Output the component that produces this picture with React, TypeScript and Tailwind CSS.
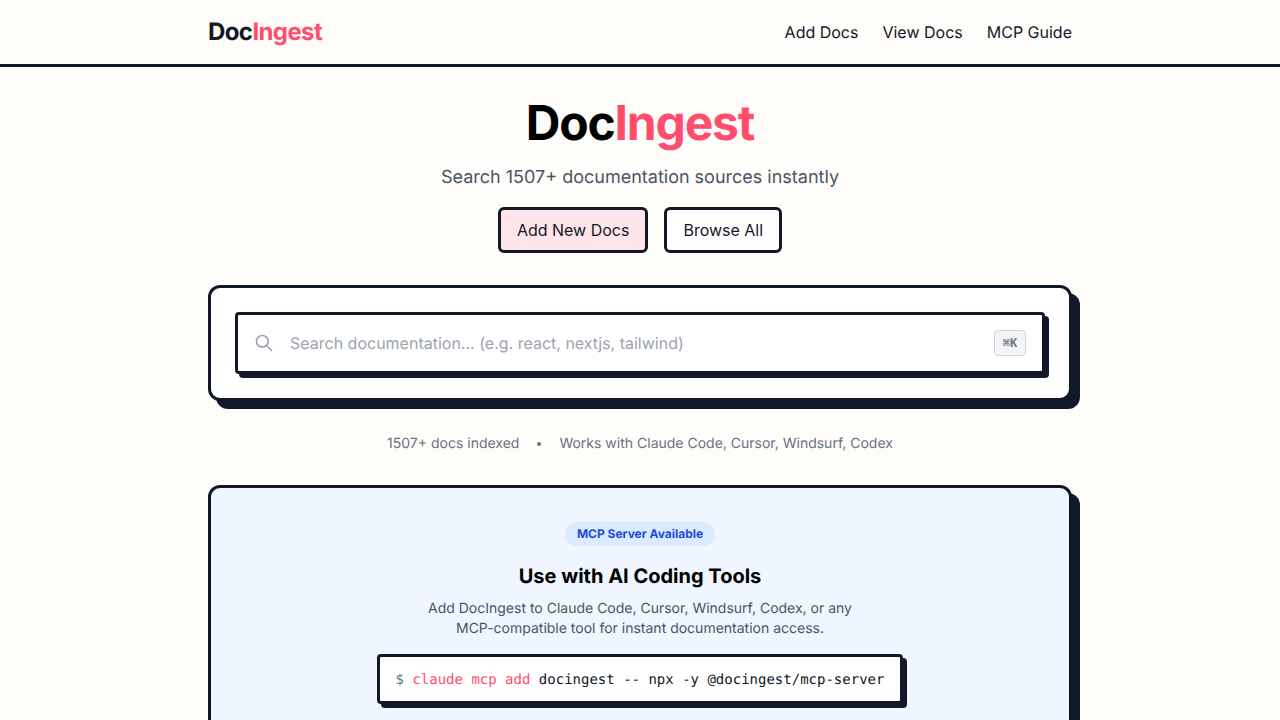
const navLinks = ['Add Docs', 'View Docs', 'MCP Guide'];

function Logo() {
  return (
    <a className="text-2xl font-bold tracking-tight text-[#111827]">
      Doc<span className="text-[#ff4d6d]">Ingest</span>
    </a>
  );
}

function SearchIcon() {
  return (
    <svg className="h-5 w-5 text-[#9ca3af]" fill="none" viewBox="0 0 24 24" stroke="currentColor" strokeWidth={2}>
      <path strokeLinecap="round" strokeLinejoin="round" d="M21 21l-6-6m2-5a7 7 0 11-14 0 7 7 0 0114 0z" />
    </svg>
  );
}

export default function App() {
  return (
    <div className="min-h-screen bg-[#fffdf9] font-['Inter',sans-serif] text-[#111827] [text-rendering:geometricPrecision]">
      <header className="border-b-[3px] border-[#111827]">
        <div className="mx-auto flex h-16 max-w-4xl items-center justify-between px-4">
          <Logo />
          <nav className="flex items-center gap-6">
            {navLinks.map((link) => (
              <a key={link} className="text-base text-[#111827]">
                {link}
              </a>
            ))}
          </nav>
        </div>
      </header>

      <main className="mx-auto max-w-4xl px-4 pt-8">
        <section className="flex flex-col items-center">
          <h1 className="text-5xl font-bold tracking-tight text-black">
            Doc<span className="text-[#ff4d6d]">Ingest</span>
          </h1>
          <p className="mt-4 text-lg leading-[30px] text-[#4b5563]">Search 1507+ documentation sources instantly</p>
          <div className="mt-[14px] flex items-center gap-4">
            <button className="rounded-md border-[3px] border-[#111827] bg-[#ffe5ea] px-4 py-2 text-base">
              Add New Docs
            </button>
            <button className="rounded-md border-[3px] border-[#111827] bg-white px-4 py-2 text-base">
              Browse All
            </button>
          </div>
        </section>

        <section className="mt-8 rounded-xl border-[3px] border-[#111827] bg-white p-6 shadow-[8px_8px_0_#111827]">
          <div className="flex h-[62px] items-center rounded-sm border-[3px] border-[#111827] bg-white pr-4 pl-4 shadow-[4px_4px_0_#111827]">
            <SearchIcon />
            <span className="ml-4 flex-1 text-base text-[#9ca3af]">
              Search documentation... (e.g. react, nextjs, tailwind)
            </span>
            <kbd className="flex h-[26px] w-8 items-center justify-center rounded border border-[#d1d5db] bg-[#f3f4f6] font-['DejaVu_Sans_Mono',monospace] text-xs font-semibold text-[#6b7280]">
              ⌘K
            </kbd>
          </div>
        </section>

        <div className="mt-8 flex items-center justify-center gap-[18px] text-sm leading-[22px] text-[#6b7280]">
          <span>1507+ docs indexed</span>
          <span className="h-1 w-1 rounded-full bg-[#6b7280]" />
          <span>Works with Claude Code, Cursor, Windsurf, Codex</span>
        </div>

        <section className="mt-[30px] mb-8 flex flex-col items-center rounded-xl border-[3px] border-[#111827] bg-[#eff6ff] px-8 pt-[34px] pb-8 shadow-[8px_8px_0_#111827]">
          <span className="rounded-full bg-[#dbeafe] px-3 py-1 text-xs font-bold text-[#1d4ed8]">
            MCP Server Available
          </span>
          <h2 className="mt-4 text-xl font-bold text-black">Use with AI Coding Tools</h2>
          <p className="mt-[9px] max-w-md text-center text-sm leading-5 text-[#4b5563]">
            Add DocIngest to Claude Code, Cursor, Windsurf, Codex, or any MCP-compatible tool for instant documentation access.
          </p>
          <div className="mt-[15px] rounded-sm border-[3px] border-[#111827] bg-white px-4 pt-[13px] pb-[11px] font-['DejaVu_Sans_Mono',monospace] text-sm shadow-[4px_4px_0_#111827]">
            <span className="text-[#6b7280]">$ </span>
            <span className="text-[#ff4d6d]">claude mcp add</span>
            <span className="text-[#111827]"> docingest -- npx -y @docingest/mcp-server</span>
          </div>
        </section>
      </main>
    </div>
  );
}
